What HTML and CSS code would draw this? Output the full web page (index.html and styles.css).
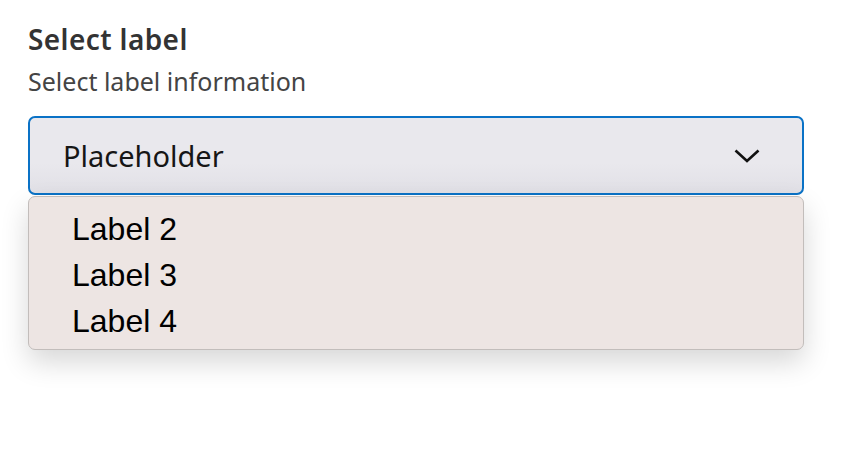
FILE: index.html
```
<!DOCTYPE html>
<html lang="en">
<head>
<meta charset="utf-8">
<title>Select label</title>
<link rel="stylesheet" href="styles.css">
</head>
<body>
<div class="field">
  <div class="title">Select label</div>
  <div class="hint">Select label information</div>
  <div class="select">
    <span class="placeholder">Placeholder</span>
    <svg class="chevron" width="26" height="14" viewBox="0 0 26 14"><path d="M1.5 1.5 L13 12 L24.5 1.5" fill="none" stroke="#111" stroke-width="2.6"/></svg>
  </div>
  <div class="options">
    <div class="option">Label 2</div>
    <div class="option">Label 3</div>
    <div class="option">Label 4</div>
  </div>
</div>
</body>
</html>
```
FILE: styles.css
```
html, body {
  margin: 0;
  padding: 0;
  background: #ffffff;
}
body {
  min-height: 100vh;
  font-family: "Noto Sans", "Open Sans", sans-serif;
}
.field {
  padding: 22px 38px 60px 28px;
  display: flex;
  flex-direction: column;
}
.title {
  font-size: 28px;
  letter-spacing: 0.4px;
  font-weight: 600;
  color: #333333;
  line-height: 34px;
}
.hint {
  font-size: 25px;
  color: #444444;
  line-height: 30px;
  margin-top: 10px;
}
.select {
  box-sizing: border-box;
  margin-top: 20px;
  height: 79px;
  border: 2px solid #0a72c6;
  border-radius: 7px;
  background: linear-gradient(to bottom, #e9e8ed 0%, #e9e8ed 60%, #e1e0e6 100%);
  display: flex;
  align-items: center;
  justify-content: space-between;
  padding: 0 42px 0 33px;
}
.placeholder {
  font-size: 29px;
  color: #161616;
}
.chevron {
  display: block;
}
.options {
  margin-top: 1px;
  box-sizing: border-box;
  padding: 9px 0 5px 43px;
  background: #ede5e3;
  border: 1px solid #c2bdbb;
  border-radius: 7px;
  box-shadow: 0 12px 28px rgba(0, 0, 0, 0.16);
  font-family: "Liberation Sans", Arial, sans-serif;
}
.option {
  font-size: 32px;
  line-height: 46px;
  color: #000000;
}
```
